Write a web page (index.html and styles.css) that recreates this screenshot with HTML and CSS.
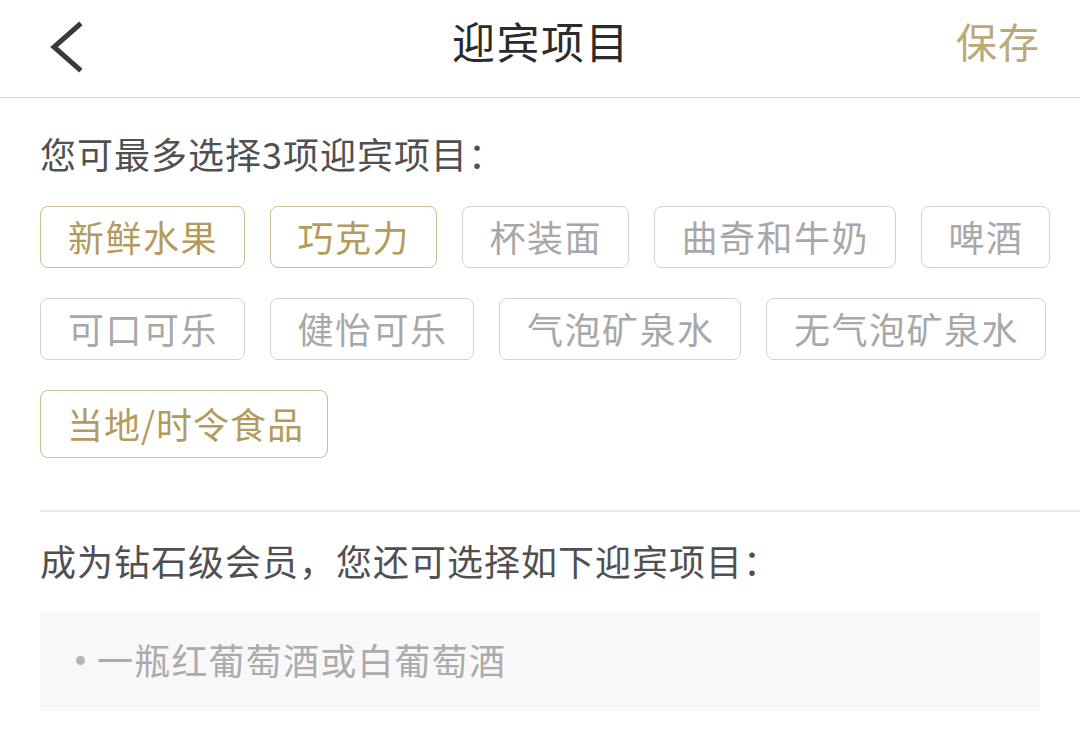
FILE: index.html
```html
<!DOCTYPE html>
<html lang="zh-CN">
<head>
<meta charset="utf-8">
<title>迎宾项目</title>
<link rel="stylesheet" href="styles.css">
</head>
<body>
<header class="nav">
  <div class="nav-left">
    <svg class="back" width="40" height="52" viewBox="0 0 40 52" aria-hidden="true">
      <polyline points="33,4 8,26 33,48" fill="none" stroke="#3a3a3a" stroke-width="5" stroke-linecap="square" stroke-linejoin="miter"/>
    </svg>
  </div>
  <div class="nav-title">迎宾项目</div>
  <div class="nav-right">保存</div>
</header>
<main class="content">
  <section class="group">
    <div class="label">您可最多选择3项迎宾项目：</div>
    <div class="tags">
      <span class="tag on">新鲜水果</span>
      <span class="tag on">巧克力</span>
      <span class="tag">杯装面</span>
      <span class="tag">曲奇和牛奶</span>
      <span class="tag">啤酒</span>
      <span class="tag">可口可乐</span>
      <span class="tag">健怡可乐</span>
      <span class="tag">气泡矿泉水</span>
      <span class="tag">无气泡矿泉水</span>
      <span class="tag on tall">当地/时令食品</span>
    </div>
  </section>
  <div class="divider"></div>
  <section class="group2">
    <div class="label">成为钻石级会员，您还可选择如下迎宾项目：</div>
    <div class="extra">
      <span class="dot"></span><span class="extra-text">一瓶红葡萄酒或白葡萄酒</span>
    </div>
  </section>
</main>
</body>
</html>
```
FILE: styles.css
```css
* { box-sizing: border-box; }
html, body {
  margin: 0;
  padding: 0;
  background: #fff;
}
body {
  width: 1080px;
  height: 743px;
  overflow: hidden;
  font-family: "Noto Sans CJK SC", "Noto Sans", sans-serif;
}
.nav {
  height: 98px;
  border-bottom: 1.5px solid #dcdcdc;
  display: grid;
  grid-template-columns: 1fr auto 1fr;
  align-items: center;
  padding: 0 40px 0 46px;
}
.nav-left {
  display: flex;
  align-items: center;
  padding-bottom: 4px;
}
.back { display: block; }
.nav-title {
  font-size: 43px;
  color: #2b2b2b;
  line-height: 1;
  padding-bottom: 16px;
  letter-spacing: 1.5px;
  margin-right: 4px;
}
.nav-right {
  justify-self: end;
  font-size: 41px;
  color: #bda878;
  line-height: 1;
  padding-bottom: 16px;
  letter-spacing: 1px;
}
.content {
  padding: 30px 0 0 40px;
}
.label {
  font-size: 36px;
  line-height: 50px;
  color: #505050;
  white-space: nowrap;
  letter-spacing: 1px;
}
.tags {
  margin-top: 28px;
  display: flex;
  flex-wrap: wrap;
  column-gap: 25px;
  row-gap: 30px;
  width: 1020px;
}
.tag {
  display: inline-block;
  height: 62px;
  padding: 0 25.5px 0 27px;
  border: 1.5px solid #d2d2d2;
  border-radius: 8px;
  font-size: 36px;
  line-height: 58px;
  color: #a8a8a8;
  white-space: nowrap;
  letter-spacing: 1.5px;
}
.tag.on {
  border-color: #cdbd92;
  color: #b49b5c;
}
.tag.tall {
  height: 68px;
  line-height: 64px;
  padding: 0 23px 0 26px;
  letter-spacing: 1px;
}
.divider {
  margin-top: 52px;
  height: 1.5px;
  background: #ebebeb;
}
.group2 {
  padding-top: 23px;
}
.extra {
  margin-top: 26px;
  width: 1000px;
  height: 100px;
  background: #f8f8fa;
  display: flex;
  align-items: center;
  padding-left: 36px;
}
.dot {
  width: 9px;
  height: 9px;
  border-radius: 50%;
  background: #b4b4b4;
  margin-right: 12px;
}
.extra-text {
  font-size: 36px;
  color: #ababab;
  line-height: 1;
  padding-bottom: 4px;
  letter-spacing: 1.2px;
}
```
